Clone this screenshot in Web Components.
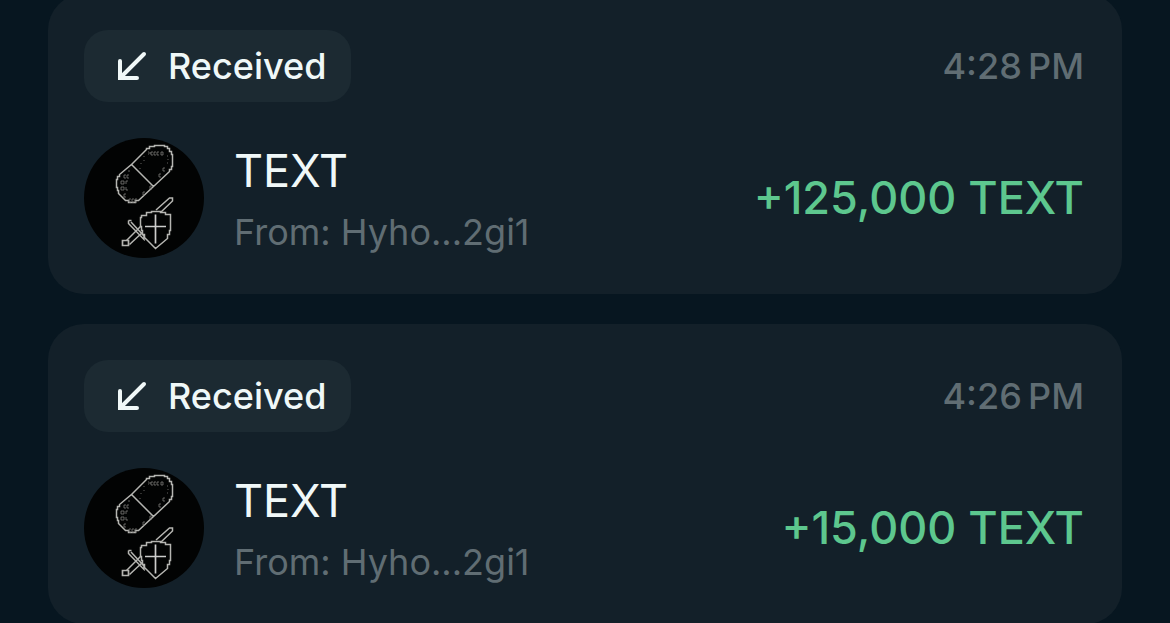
<!DOCTYPE html>
<html lang="en">
<head>
<meta charset="utf-8">
<meta name="viewport" content="width=device-width, initial-scale=1">
<title>Activity</title>
<style>
  html, body { margin: 0; height: 100%; }
  body { overflow: hidden; background: #071620; font-family: Inter, "Liberation Sans", sans-serif; color: #f0f8f8; }
</style>
</head>
<body>
<activity-list>
  <transaction-card>
    <status-pill slot="status">Received</status-pill>
    <time slot="time" datetime="16:28">4:28&#8239;PM</time>
    <token-avatar slot="avatar"></token-avatar>
    <span slot="token">TEXT</span>
    <span slot="sender">From: Hyho...2gi1</span>
    <span slot="amount">+125,000 TEXT</span>
  </transaction-card>
  <transaction-card>
    <status-pill slot="status">Received</status-pill>
    <time slot="time" datetime="16:26">4:26&#8239;PM</time>
    <token-avatar slot="avatar"></token-avatar>
    <span slot="token">TEXT</span>
    <span slot="sender">From: Hyho...2gi1</span>
    <span slot="amount">+15,000 TEXT</span>
  </transaction-card>
</activity-list>

<template id="activity-list">
  <style>
    /* The list is scrolled slightly past the top of the first card. */
    :host { display: flex; flex-direction: column; gap: 30px; margin-top: -6px; padding: 0 48px; }
  </style>
  <slot></slot>
</template>

<template id="transaction-card">
  <style>
    :host { display: flex; flex-direction: column; gap: 36px; padding: 36px 38px 36px 36px; border-radius: 36px; background: #132029; }
    .row { display: flex; align-items: center; justify-content: space-between; }
    .token { display: flex; align-items: center; gap: 30px; }
    .labels { display: flex; flex-direction: column; gap: 6px; }
    .time, .sender { font-size: 36px; line-height: 48px; color: #606d73; font-weight: 500; }
    .sender { font-weight: 400; }
    .name, .amount { font-size: 45px; line-height: 62px; }
    .amount { font-weight: 500; color: #5dc78e; }
  </style>
  <div class="row">
    <slot name="status"></slot>
    <div class="time"><slot name="time"></slot></div>
  </div>
  <div class="row">
    <div class="token">
      <slot name="avatar"></slot>
      <div class="labels">
        <div class="name"><slot name="token"></slot></div>
        <div class="sender"><slot name="sender"></slot></div>
      </div>
    </div>
    <div class="amount"><slot name="amount"></slot></div>
  </div>
</template>

<template id="status-pill">
  <style>
    :host { display: flex; align-items: center; gap: 18px; padding: 12px 25px 12px 30px; border-radius: 24px; background: #1c2a32; font-size: 36px; line-height: 48px; font-weight: 500; }
    svg { width: 36px; height: 36px; }
  </style>
  <svg viewBox="0 0 36 36" fill="none" stroke="currentColor" stroke-width="4" stroke-linecap="round" stroke-linejoin="miter" aria-hidden="true">
    <path d="M30 6 6 30M6 13v17h17"/>
  </svg>
  <span><slot></slot></span>
</template>

<template id="token-avatar">
  <style>
    :host { display: block; width: 120px; height: 120px; border-radius: 50%; overflow: hidden; background: #020303; }
    svg { display: block; width: 100%; height: 100%; }
  </style>
  <svg viewBox="0 0 120 120" fill="none" stroke="#b5b5b1" stroke-width="1.5" aria-hidden="true">
    <!-- capsule -->
    <path d="M47.500 26.500 62.500 11.500V10.500H65.500V8.500H70.500V7.500H80.500V8.500H83.500V10.500H85.500V13.500H87.500V16.500H88.500V28.500H87.500V31.500H85.500V33.500L54.500 62.500H51.500V64.500H44.500V62.500H41.500L39.500 60.500 34.500 55.500V52.500H33.500V49.500H32.500V41.500H33.500V38.500H35.500V36.500L47.500 26.500 69.500 48.500"/>
    <g stroke="#7c7c78" stroke-width=".8">
      <path d="M64 14h1m-1 2h1m1-2v2m3-2h-2v3h2m3-3h-2v3h2m3-3h-2v3h2m2-3v3h2v-3zm6 4h1m0 3v1m-1 3h1m-3 5h-2v3h2m-4 3h-2v3h2m-9 9h-2v3h2m-7 3h-2v3h2M60 18v1m0 3v1m-3 2v1m-1 4v1"/>
      <path d="M45 32v2m-3 3h-2v3h2m3-3h-2v3h2m-5 3h-3v3h3zm2 0v3m0-3h2m-4 6h-3v3h3zm2 0v3h2m-2 4h-2v3h2m5 2h-2v3h2m3-3h-2v3h2m3-3h-2v3h2"/>
    </g>
    <!-- sword behind the shield -->
    <path d="M72 72 85.500 60H88.500V63L76 75"/>
    <path d="M56.500 88.500 42.500 102.500M60 93 45.500 106.500M44.500 82.500H47.500M44.500 82.500V85.500L60 101.500V98L47 84"/>
    <path d="M38.500 102.500h6v5h-6z" stroke-width="1.700"/>
    <!-- shield and cross -->
    <path fill="#020303" d="M62.500 75.500V74.500H67.500V73.500H76.500V74.500H81.500V76.500H86.500V92.500H85.500V96.500H83.500V100.500L71.500 110.500 60.500 99.500V96.500H58.500V92.500H57.500V88.500H56.500V79.500H57.500V77.500H62.500Z"/>
    <path d="M71.500 76.500V105.500M61 88.500H82" stroke="#cccccb" stroke-width="1.700"/>
  </svg>
</template>

<script>
  for (const name of ["activity-list", "transaction-card", "status-pill", "token-avatar"]) {
    customElements.define(name, class extends HTMLElement {
      constructor() {
        super();
        this.attachShadow({ mode: "open" }).append(document.getElementById(name).content.cloneNode(true));
      }
    });
  }
</script>
</body>
</html>
